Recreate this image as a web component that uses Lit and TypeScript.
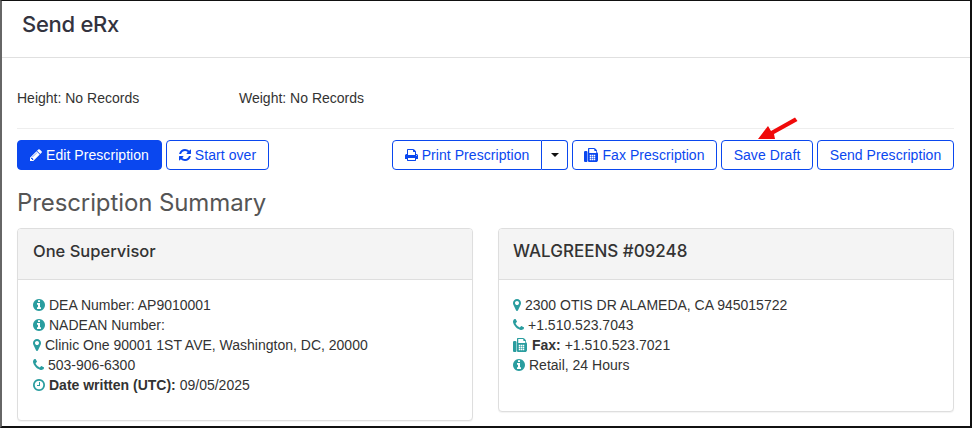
import { LitElement, html, css, svg } from "lit";
import { customElement } from "lit/decorators.js";

const ICONS: Record<string, { x: number; w: number; d: string }> = {
  info: { x: 128, w: 12, d: "M1152 1376v-160q0-14-9-23t-23-9h-96v-512q0-14-9-23t-23-9h-320q-14 0-23 9t-9 23v160q0 14 9 23t23 9h96v320h-96q-14 0-23 9t-9 23v160q0 14 9 23t23 9h448q14 0 23-9t9-23zm-128-896v-160q0-14-9-23t-23-9h-192q-14 0-23 9t-9 23v160q0 14 9 23t23 9h192q14 0 23-9t9-23zm640 416q0 209-103 385.5t-279.5 279.5-385.5 103-385.5-103-279.5-279.5-103-385.5 103-385.5 279.5-279.5 385.5-103 385.5 103 279.5 279.5 103 385.5z" },
  phone: { x: 192, w: 11, d: "M1600 1240q0 27-10 70.5t-21 68.5q-21 50-122 106-94 51-186 51-27 0-53-3.5t-57.5-12.5-47-14.5-55.5-20.5-49-18q-98-35-175-83-127-79-264-216t-216-264q-48-77-83-175-3-9-18-49t-20.5-55.5-14.5-47-12.5-57.5-3.5-53q0-92 51-186 56-101 106-122 25-11 68.5-21t70.5-10q14 0 21 3 18 6 53 76 11 19 30 54t35 63.5 31 53.5q3 4 17.5 25t21.5 35.5 7 28.5q0 20-28.5 50t-62 55-62 53-28.5 46q0 9 5 22.5t8.5 20.5 14 24 11.5 19q76 137 174 235t235 174q2 1 19 11.5t24 14 20.5 8.5 22.5 5q18 0 46-28.5t53-62 55-62 50-28.5q14 0 28.5 7t35.5 21.5 25 17.5q25 15 53.5 31t63.5 35 54 30q70 35 76 53 3 7 3 21z" },
  marker: { x: 384, w: 8, d: "M1152 640q0-106-75-181t-181-75-181 75-75 181 75 181 181 75 181-75 75-181zm256 0q0 109-33 179l-364 774q-16 33-47.5 52t-67.5 19-67.5-19-46.5-52l-365-774q-33-70-33-179 0-212 150-362t362-150 362 150 150 362z" },
  clock: { x: 128, w: 12, d: "M1024 544v448q0 14-9 23t-23 9h-320q-14 0-23-9t-9-23v-64q0-14 9-23t23-9h224v-352q0-14 9-23t23-9h64q14 0 23 9t9 23zm416 352q0-148-73-273t-198-198-273-73-273 73-198 198-73 273 73 273 198 198 273 73 273-73 198-198 73-273zm224 0q0 209-103 385.5t-279.5 279.5-385.5 103-385.5-103-279.5-279.5-103-385.5 103-385.5 279.5-279.5 385.5-103 385.5 103 279.5 279.5 103 385.5z" },
  pencil: { x: 128, w: 12, d: "M491 1536l91-91-235-235-91 91v107h128v128h107zm523-928q0-22-22-22-10 0-17 7l-542 542q-7 7-7 17 0 22 22 22 10 0 17-7l542-542q7-7 7-17zm-54-192l416 416-832 832h-416v-416zm683 96q0 53-37 90l-166 166-416-416 166-165q36-38 90-38 53 0 91 38l235 234q37 39 37 91z" },
  refresh: { x: 128, w: 12, d: "M1639 1056q0 5-1 7-64 268-268 434.5t-478 166.5q-146 0-282.5-55t-243.5-157l-129 129q-19 19-45 19t-45-19-19-45v-448q0-26 19-45t45-19h448q26 0 45 19t19 45-19 45l-137 137q71 66 161 102t187 36q134 0 250-65t186-179q11-17 53-117 8-23 30-23h192q13 0 22.5 9.5t9.5 22.5zm25-800v448q0 26-19 45t-45 19h-448q-26 0-45-19t-19-45 19-45l138-138q-148-137-349-137-134 0-250 65t-186 179q-11 17-53 117-8 23-30 23h-199q-13 0-22.5-9.5t-9.5-22.5v-7q65-268 270-434.5t480-166.5q146 0 284 55.5t245 156.5l130-129q19-19 45-19t45 19 19 45z" },
  print: { x: 64, w: 13, d: "M448 1536h896v-256h-896v256zm0-640h896v-384h-160q-40 0-68-28t-28-68v-160h-640v640zm1152 64q0-26-19-45t-45-19-45 19-19 45 19 45 45 19 45-19 19-45zm128 0v416q0 13-9.5 22.5t-22.5 9.5h-224v160q0 40-28 68t-68 28h-960q-40 0-68-28t-28-68v-160h-224q-13 0-22.5-9.5t-9.5-22.5v-416q0-79 56.5-135.5t135.5-56.5h64v-544q0-40 28-68t68-28h672q40 0 88 20t76 48l152 152q28 28 48 76t20 88v256h64q79 0 135.5 56.5t56.5 135.5z" },
  fax: { x: 0, w: 14, d: "M288 384q66 0 113 47t47 113v1088q0 66-47 113t-113 47h-128q-66 0-113-47t-47-113v-1088q0-66 47-113t113-47h128zm1376 163q58 34 93 93t35 128v768q0 106-75 181t-181 75h-864q-66 0-113-47t-47-113v-1536q0-40 28-68t68-28h672q40 0 88 20t76 48l152 152q28 28 48 76t20 88v163zm-736 989v-128q0-14-9-23t-23-9h-128q-14 0-23 9t-9 23v128q0 14 9 23t23 9h128q14 0 23-9t9-23zm0-256v-128q0-14-9-23t-23-9h-128q-14 0-23 9t-9 23v128q0 14 9 23t23 9h128q14 0 23-9t9-23zm0-256v-128q0-14-9-23t-23-9h-128q-14 0-23 9t-9 23v128q0 14 9 23t23 9h128q14 0 23-9t9-23zm256 512v-128q0-14-9-23t-23-9h-128q-14 0-23 9t-9 23v128q0 14 9 23t23 9h128q14 0 23-9t9-23zm0-256v-128q0-14-9-23t-23-9h-128q-14 0-23 9t-9 23v128q0 14 9 23t23 9h128q14 0 23-9t9-23zm0-256v-128q0-14-9-23t-23-9h-128q-14 0-23 9t-9 23v128q0 14 9 23t23 9h128q14 0 23-9t9-23zm256 512v-128q0-14-9-23t-23-9h-128q-14 0-23 9t-9 23v128q0 14 9 23t23 9h128q14 0 23-9t9-23zm0-256v-128q0-14-9-23t-23-9h-128q-14 0-23 9t-9 23v128q0 14 9 23t23 9h128q14 0 23-9t9-23zm0-256v-128q0-14-9-23t-23-9h-128q-14 0-23 9t-9 23v128q0 14 9 23t23 9h128q14 0 23-9t9-23zm128-384v-256h-160q-40 0-68-28t-28-68v-160h-640v512h896z" },
};

const icon = (name: string) => {
  const i = ICONS[name];
  return html`<svg class="ic ${name}" width=${i.w} height="14" viewBox="${i.x} 0 ${i.w * 128} 1792" fill="currentColor"><path d=${i.d} /></svg>`;
};

const arrow = svg`<path d="M0 22 L10 9 L13 14 L37 0.500 L39.500 4 L16 17 L17 22 Z" fill="#f00a0a" />`;

@customElement("app-root")
export class AppRoot extends LitElement {
  static styles = css`
    :host { display: block; width: 972px; height: 428px; overflow: hidden; font-family: "Liberation Sans", Arial, sans-serif; font-size: 14px; color: #333; background: #fff; }
    * { box-sizing: border-box; }
    .frame { position: relative; width: 972px; height: 428px; overflow: hidden; border-top: 1px solid #111; border-left: 2px solid #666; border-right: 2px solid #111; border-bottom: 2px solid #111; }
    .head { height: 57px; padding: 9px 0 0 20px; border-bottom: 1px solid #e0e0e0; }
    h1 { margin: 0; font: 500 22px/28px Inter, sans-serif; color: #33333f; letter-spacing: -0.28px; }
    .main { padding: 0 16px 0 15px; }
    .vitals { display: flex; height: 71px; padding-top: 32px; line-height: 16px; border-bottom: 1px solid #eee; }
    .vitals span { width: 222px; }
    .actions { display: flex; justify-content: space-between; margin-top: 11px; }
    .group { display: flex; gap: 4px; }
    .btn { display: flex; align-items: center; justify-content: center; gap: 4px; height: 30px; padding: 0; border: 1px solid #0a47ef; border-radius: 4px; background: #fff; color: #0a47ef; font: 14px "Liberation Sans", Arial, sans-serif; letter-spacing: 0.06px; white-space: nowrap; }
    .btn.primary { background: #0a47ef; color: #fff; }
    .btn.edit { width: 145px; }
    .btn.over { width: 103px; }
    .btn.fax-btn { width: 145px; }
    .btn.save { width: 92px; }
    .btn.send { width: 137px; }
    .split { display: flex; }
    .split .btn:first-child { border-radius: 4px 0 0 4px; width: 150px; }
    .split .btn:last-child { border-radius: 0 4px 4px 0; border-left: 0; width: 26px; }
    .caret { width: 0; height: 0; border: 4px solid transparent; border-top-color: #111; border-bottom: 0; }
    h2 { margin: 18px 0 10px; font: 400 24px/30px Inter, sans-serif; color: #555; letter-spacing: -0.1px; }
    .cards { display: flex; justify-content: space-between; align-items: flex-start; }
    .card { width: 456px; border: 1px solid #dedede; border-radius: 4px; background: #fff; box-shadow: 0 1px 1px rgba(0,0,0,.05); }
    .card.a { height: 193px; }
    .card.b { height: 184px; }
    .card header { height: 51px; padding: 0 15px; background: #f4f4f4; border-bottom: 1px solid #dedede; border-radius: 3px 3px 0 0; font: 500 16.5px/45px Inter, sans-serif; color: #333; }
    .card.b header { font-size: 17px; padding-left: 14px; }
    .lines { padding: 15px 15px 0; line-height: 20px; }
    .card.b .lines { padding-left: 14px; }
    .line { display: flex; align-items: center; height: 20px; white-space: pre; }
    .line .ic { color: #2a9d9f; margin-right: 4px; }
    .line .ic.fax { margin-right: 5px; }
    b { font-weight: 700; }
    .arrow { position: absolute; left: 756px; top: 116px; }
  `;

  private line(ic: string, content: unknown) {
    return html`<div class="line">${icon(ic)}<span>${content}</span></div>`;
  }

  render() {
    return html`
      <div class="frame">
        <div class="head"><h1>Send eRx</h1></div>
        <div class="main">
          <div class="vitals"><span>Height: No Records</span><span>Weight: No Records</span></div>
          <div class="actions">
            <div class="group">
              <button class="btn primary edit">${icon("pencil")}Edit Prescription</button>
              <button class="btn over">${icon("refresh")}Start over</button>
            </div>
            <div class="group">
              <div class="split">
                <button class="btn">${icon("print")}Print Prescription</button>
                <button class="btn"><span class="caret"></span></button>
              </div>
              <button class="btn fax-btn">${icon("fax")}Fax Prescription</button>
              <button class="btn save">Save Draft</button>
              <button class="btn send">Send Prescription</button>
            </div>
          </div>
          <h2>Prescription Summary</h2>
          <div class="cards">
            <section class="card a">
              <header>One Supervisor</header>
              <div class="lines">
                ${this.line("info", "DEA Number: AP9010001")}
                ${this.line("info", "NADEAN Number:")}
                ${this.line("marker", "Clinic One 90001 1ST AVE, Washington, DC, 20000")}
                ${this.line("phone", "503-906-6300")}
                ${this.line("clock", html`<b>Date written (UTC):</b> 09/05/2025`)}
              </div>
            </section>
            <section class="card b">
              <header>WALGREENS #09248</header>
              <div class="lines">
                ${this.line("marker", "2300 OTIS DR ALAMEDA, CA 945015722")}
                ${this.line("phone", "+1.510.523.7043")}
                ${this.line("fax", html`<b>Fax:</b> +1.510.523.7021`)}
                ${this.line("info", "Retail, 24 Hours")}
              </div>
            </section>
          </div>
        </div>
        <svg class="arrow" width="40" height="23" viewBox="0 0 40 23">${arrow}</svg>
      </div>
    `;
  }
}
